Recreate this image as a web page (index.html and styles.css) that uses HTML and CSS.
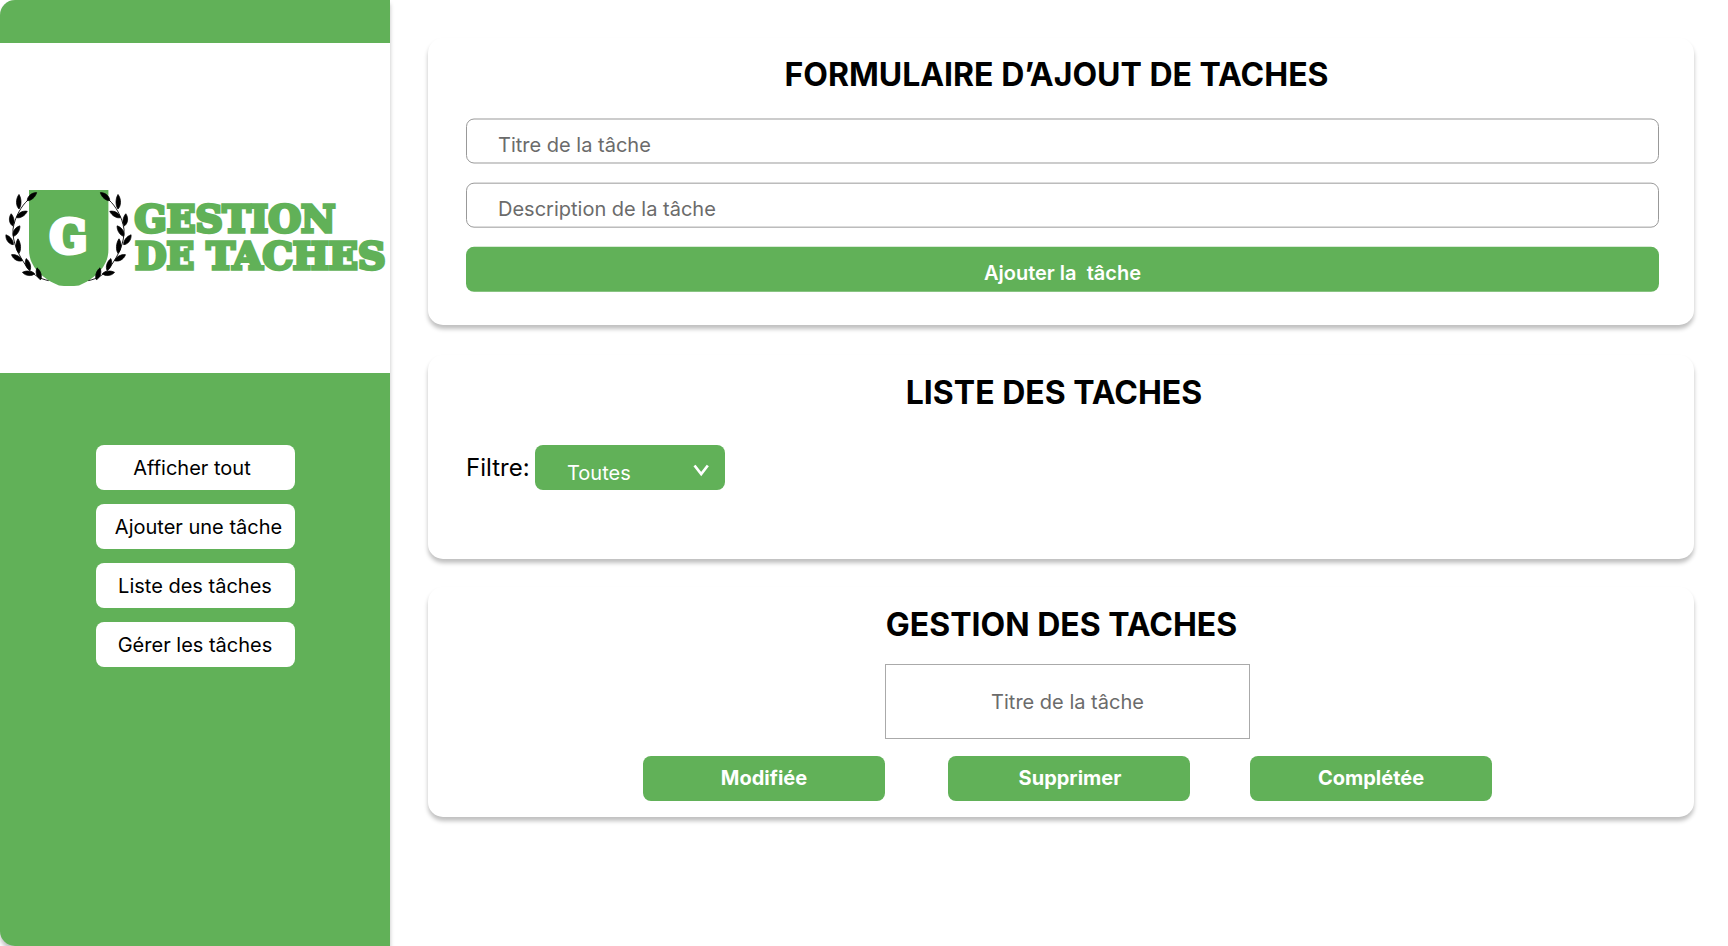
FILE: index.html
```html
<!DOCTYPE html>
<html lang="fr">
<head>
<meta charset="utf-8">
<title>Gestion de taches</title>
<link rel="stylesheet" href="styles.css">
</head>
<body>
<div class="app">
  <aside class="sidebar">
    <div class="brand">
      <svg class="logo" width="390" height="130" viewBox="0 0 390 130">
        <defs>
          <path id="leaf" d="M0 0C7 -9 25 -11 37 0C26 8 8 8 0 0Z" stroke="#000" stroke-width="2"/>
          <g id="branch">
            <path d="M84 90C66 106 44 140 39 178C37 216 54 256 86 298C102 316 122 327 146 332" fill="none" stroke="#000" stroke-width="2.6"/>
            <use href="#leaf" transform="translate(82 92) rotate(-41)"/>
            <use href="#leaf" transform="translate(57 117) rotate(-90) scale(1.18 1)"/>
            <use href="#leaf" transform="translate(50 143) rotate(-31)"/>
            <use href="#leaf" transform="translate(38 168) rotate(-97)"/>
            <use href="#leaf" transform="translate(40 199) rotate(-58)"/>
            <use href="#leaf" transform="translate(40 224) rotate(-127)"/>
            <use href="#leaf" transform="translate(57 250) rotate(-94) scale(1.18 1)"/>
            <use href="#leaf" transform="translate(67 272) rotate(-151)"/>
            <use href="#leaf" transform="translate(90 301) rotate(-108)"/>
            <use href="#leaf" transform="translate(104 311) rotate(-174)"/>
            <use href="#leaf" transform="translate(122 329) rotate(-107)"/>
          </g>
        </defs>
        <path d="M29 20H108.400V80C108.400 97 94 109 79 115.500Q69 116.500 59 115.500C43 109 29 97 29 80Z" fill="#61b158"/>
        <use href="#branch" transform="scale(.3333)"/>
        <use href="#branch" transform="translate(137 0) scale(-.3333 .3333)"/>
        <text class="logo-letter" x="49.500" y="83" textLength="38" lengthAdjust="spacingAndGlyphs">G</text>
        <text class="logo-word" x="134.500" y="61.500" textLength="201" lengthAdjust="spacingAndGlyphs">GESTION</text>
        <text class="logo-word" x="135" y="99" textLength="59" lengthAdjust="spacingAndGlyphs">DE</text>
        <text class="logo-word" x="206.500" y="99" textLength="179" lengthAdjust="spacingAndGlyphs">TACHES</text>
      </svg>
    </div>
    <nav class="menu">
      <button class="menu-item menu-item-show">Afficher tout</button>
      <button class="menu-item menu-item-add">Ajouter une tâche</button>
      <button class="menu-item">Liste des tâches</button>
      <button class="menu-item">Gérer les tâches</button>
    </nav>
  </aside>
  <main class="content">
    <section class="card card-form">
      <h2 class="title title-form">FORMULAIRE D’AJOUT DE TACHES</h2>
      <div class="form">
        <div class="field">Titre de la tâche</div>
        <div class="field">Description de la tâche</div>
        <button class="submit">Ajouter la&nbsp; tâche</button>
      </div>
    </section>
    <section class="card card-list">
      <h2 class="title title-list">LISTE DES TACHES</h2>
      <div class="filter">
        <span class="filter-label">Filtre:</span>
        <div class="select">
          <span class="select-value">Toutes</span>
          <svg class="chevron" width="18" height="14" viewBox="0 0 18 14"><path d="M2.500 2.500L9.200 11L15.800 2.500" fill="none" stroke="#fff" stroke-width="2.700"/></svg>
        </div>
      </div>
    </section>
    <section class="card card-manage">
      <h2 class="title title-manage">GESTION DES TACHES</h2>
      <div class="task">Titre de la tâche</div>
      <div class="actions">
        <button class="action">Modifiée</button>
        <button class="action">Supprimer</button>
        <button class="action">Complétée</button>
      </div>
    </section>
  </main>
</div>
</body>
</html>
```
FILE: styles.css
```css
* { box-sizing: border-box; }
body {
  margin: 0;
  background: #fff;
  font-family: Inter, "Liberation Sans", sans-serif;
  font-size: 20px;
  color: #000;
}
button {
  border: 0;
  padding: 0;
  font: inherit;
  border-radius: 8px;
}
.app {
  display: flex;
  height: 946px;
  overflow: hidden;
}
.sidebar {
  width: 390px;
  height: 946px;
  flex: none;
  padding-top: 43px;
  background: #61b158;
  border-radius: 15px 0 0 15px;
  box-shadow: 0 4px 4px rgba(0, 0, 0, .25);
}
.brand {
  height: 330px;
  padding-top: 127px;
  background: #fff;
}
.logo { display: block; }
.logo-word, .logo-letter {
  font-family: "DejaVu Serif", serif;
  font-weight: 700;
}
.logo-word {
  font-size: 37.5px;
  fill: #61b158;
  stroke: #61b158;
  stroke-width: 3.4px;
}
.logo-letter {
  font-size: 46px;
  fill: #fff;
  stroke: #fff;
  stroke-width: 4px;
}
.menu {
  display: flex;
  flex-direction: column;
  align-items: center;
  gap: 14px;
  padding-top: 72px;
}
.menu-item {
  width: 199px;
  height: 45px;
  background: #fff;
  color: #000;
}
.menu-item-show { padding-right: 6px; }
.menu-item-add { padding-left: 7px; }
.content {
  width: 1266px;
  margin-left: 38px;
  padding-top: 38px;
}
.card {
  border-radius: 15px;
  background: #fff;
  box-shadow: 0 4px 4px rgba(0, 0, 0, .25);
}
.card-form { height: 287px; padding: 17px 35px 0 38px; }
.card-list { height: 204px; margin-top: 30px; padding: 18px 38px 0; }
.card-manage { height: 230px; margin-top: 28px; padding-top: 18px; }
.title {
  margin: 0;
  font-size: 32px;
  line-height: 39px;
  font-weight: 700;
  text-align: center;
}
.title-form { padding-right: 12px; }
.title-list { padding-right: 14px; }
.title-manage { padding-left: 1px; }
.form {
  display: flex;
  flex-direction: column;
  gap: 19px;
  margin-top: 24px;
}
.field {
  height: 45px;
  padding: 6px 31px 0;
  border: 1px solid #999;
  border-radius: 8px;
  line-height: 38px;
  color: #6b6b6b;
  transform: translateY(.5px);
}
.field + .field { transform: translateY(.67px); }
.submit {
  height: 45px;
  padding-top: 6px;
  background: #61b158;
  color: #fff;
  font-weight: 600;
  transform: translateY(.8px);
}
.filter {
  display: flex;
  margin-top: 33px;
}
.filter-label {
  width: 69px;
  font-size: 24px;
  line-height: 45px;
}
.select {
  display: flex;
  align-items: center;
  justify-content: space-between;
  width: 190px;
  height: 45px;
  padding: 0 15px 0 32px;
  border-radius: 8px;
  background: #61b158;
  color: #fff;
}
.select-value { padding-top: 11px; }
.chevron { margin-top: 5px; }
.task {
  width: 365px;
  height: 75px;
  margin: 20px 0 0 457px;
  border: 1px solid #aaa;
  line-height: 75px;
  text-align: center;
  color: #6b6b6b;
}
.actions {
  display: flex;
  gap: 60px;
  margin: 17px 0 0 215px;
}
.action {
  width: 242px;
  height: 45px;
  padding-bottom: 2px;
  background: #61b158;
  color: #fff;
  font-weight: 700;
}
.action:first-child { margin-right: 3px; }
.action:nth-child(2) { padding-left: 2px; }
```
